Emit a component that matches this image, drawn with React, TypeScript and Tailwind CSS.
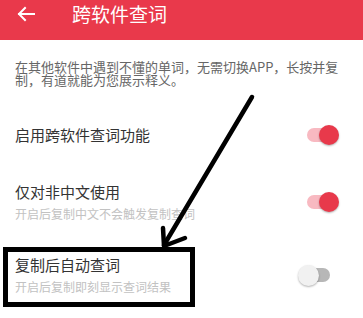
import React from 'react';

function Toggle({ on }: { on: boolean }) {
  return (
    <div className="relative w-[40px] h-[20px] flex items-center">
      <div className={on ? 'ml-[8px] w-[28px] h-[14px] rounded-full bg-[#f8b9c1]' : 'ml-[2px] w-[30px] h-[14px] rounded-full bg-[#b7b7b7]'} />
      <div
        className={
          on
            ? 'absolute right-0 top-0 w-[20px] h-[20px] rounded-full bg-[#e8394b] shadow-[0_1px_2px_rgba(0,0,0,0.3)]'
            : 'absolute left-0 top-0 w-[21px] h-[21px] rounded-full bg-[#f1f1f1] shadow-[0_1px_2px_rgba(0,0,0,0.3)]'
        }
      />
    </div>
  );
}

export default function App() {
  return (
    <div
      className="relative w-[363px] h-[318px] bg-white overflow-hidden"
      style={{ fontFamily: '"Noto Sans CJK SC", "Noto Sans", sans-serif' }}
    >
      <header className="h-10 bg-[#e9394b] flex items-start">
        <svg className="ml-[14px] mt-[2px] w-[24px] h-[24px]" viewBox="0 0 24 24" fill="none" stroke="white" strokeWidth="2" strokeLinecap="square">
          <path d="M20 12H5" />
          <path d="M11 6l-6 6 6 6" />
        </svg>
        <h1 className="ml-[34px] text-[19px] leading-[27px] text-white">跨软件查词</h1>
      </header>

      <p className="pt-5 px-[15px] text-[13px] leading-[13px] text-[#666]">
        在其他软件中遇到不懂的单词，无需切换APP，长按并复制，有道就能为您展示释义。
      </p>

      <div className="mt-[14px] h-[70px] pl-[15px] pr-[24px] flex items-center justify-between">
        <span className="text-[15px] leading-[20px] text-[#333]">启用跨软件查词功能</span>
        <Toggle on />
      </div>

      <div className="pt-[12px] pb-[21px] pl-[15px] pr-[24px] flex items-center justify-between">
        <div>
          <div className="text-[15px] leading-[20px] text-[#333]">仅对非中文使用</div>
          <div className="mt-[4px] text-[12px] leading-[16px] text-[#c2c2c2]">开启后复制中文不会触发复制查词</div>
        </div>
        <Toggle on />
      </div>

      <div className="pt-[12px] pl-[15px] pr-[25px] flex items-center justify-between">
        <div>
          <div className="text-[15px] leading-[20px] text-[#333]">复制后自动查词</div>
          <div className="mt-[4px] text-[12px] leading-[16px] text-[#c2c2c2]">开启后复制即刻显示查词结果</div>
        </div>
        <Toggle on={false} />
      </div>

      <div className="absolute left-[3px] top-[247px] w-[192px] h-[60px] border-[5px] border-black" />

      <svg className="absolute inset-0 w-[363px] h-[318px] pointer-events-none" viewBox="0 0 363 318" fill="none" stroke="black" strokeWidth="4.5" strokeLinecap="round" strokeLinejoin="round">
        <path d="M252 97L164 245" />
        <path d="M163 228L164 246L185 238" />
      </svg>
    </div>
  );
}
